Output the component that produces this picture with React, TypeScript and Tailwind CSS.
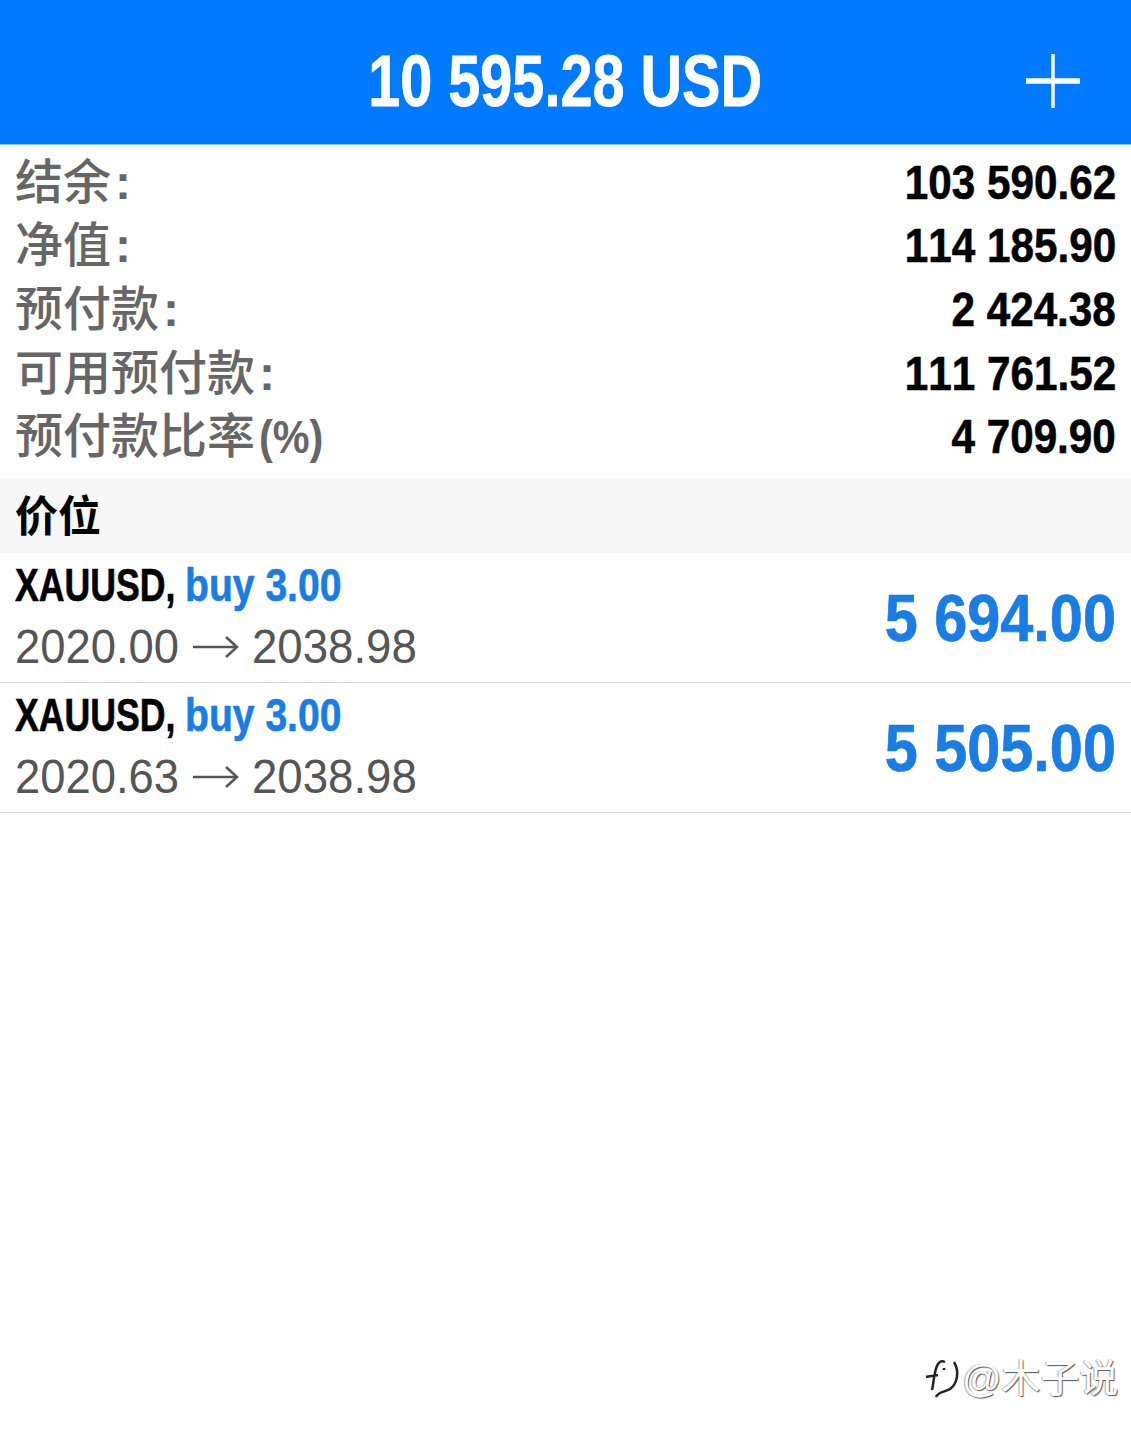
const SANS = "font-['Liberation_Sans','Noto_Sans_CJK_SC',sans-serif] [font-kerning:none]";

const summary = [
  { label: "结余", suffix: ":", value: "103 590.62" },
  { label: "净值", suffix: ":", value: "114 185.90" },
  { label: "预付款", suffix: ":", value: "2 424.38" },
  { label: "可用预付款", suffix: ":", value: "111 761.52" },
  { label: "预付款比率", suffix: "(%)", value: "4 709.90" },
];

const positions = [
  { open: "2020.00", profit: "5 694.00" },
  { open: "2020.63", profit: "5 505.00" },
];

function Position({ open, profit }: { open: string; profit: string }) {
  return (
    <div className="flex h-[130px] items-center justify-between border-b border-[#d4d4d4] pl-[15px] pr-[15px]">
      <div className="flex flex-col">
        <div className="flex h-[62px] items-start whitespace-nowrap text-[46px] leading-[54px] font-bold [-webkit-text-stroke:0.6px_currentColor]">
          <span className="inline-block w-[170px] origin-left scale-x-[0.775] text-black">XAUUSD,</span>
          <span className="inline-block origin-left scale-x-[0.85] text-[#1a7de3]">buy 3.00</span>
        </div>
        <div className="flex h-[58px] items-center whitespace-nowrap pb-[4px] text-[48px] leading-[58px] text-[#555555]">
          <span className="inline-block w-[163px] origin-left scale-x-[0.945]">{open}</span>
          <svg width="46" height="24" viewBox="0 0 46 24" className="ml-[15px] mr-[13px]" fill="none" stroke="#555555" strokeWidth="2.5">
            <path d="M0 12H44M33 2L44 12L33 22" />
          </svg>
          <span className="inline-block w-[165px] origin-left scale-x-[0.95]">2038.98</span>
        </div>
      </div>
      <div className="origin-right scale-x-[0.9] whitespace-nowrap text-[66px] leading-none font-bold text-[#1a7de3] [-webkit-text-stroke:0.7px_currentColor]">
        {profit}
      </div>
    </div>
  );
}

export default function App() {
  return (
    <div className={`relative h-[1441px] w-[1131px] overflow-hidden bg-white ${SANS}`}>
      <header className="relative flex h-[145px] items-center justify-center border-b border-[#8cc1fb] bg-[#007aff] pt-[18px] text-white">
        <div className="scale-x-[0.8] whitespace-nowrap text-[72px] leading-none font-bold [-webkit-text-stroke:0.8px_currentColor]">
          10 595.28 USD
        </div>
        <svg width="54" height="54" viewBox="0 0 54 54" className="absolute right-[51px] top-[54px]" fill="none" stroke="white">
          <path d="M27 0V54" strokeWidth="3.5" />
          <path d="M0 27H54" strokeWidth="5.5" />
        </svg>
      </header>

      <section className="flex h-[333px] flex-col pt-[6px]">
        {summary.map((row) => (
          <div key={row.label} className="flex h-[63.6px] items-center justify-between pl-[15px] pr-[15px]">
            <span className="flex items-center whitespace-nowrap text-[48px] leading-none font-medium text-[#666666]">
              {row.label}
              {row.suffix === ":" ? (
                <span className="ml-[4px] font-bold">:</span>
              ) : (
                <span className="ml-[4px] inline-block origin-left scale-x-[0.9] text-[46px] font-bold">{row.suffix}</span>
              )}
            </span>
            <span className="origin-right scale-x-[0.88] whitespace-nowrap text-[48px] leading-none font-bold text-black [-webkit-text-stroke:0.6px_currentColor]">
              {row.value}
            </span>
          </div>
        ))}
      </section>

      <div className="flex h-[75px] items-center bg-[#f7f7f7] pl-[15px] pt-[3px] text-[43px] leading-none font-bold text-black">
        价位
      </div>

      {positions.map((p) => (
        <Position key={p.open} open={p.open} profit={p.profit} />
      ))}

      {/* watermark */}
      <div className="absolute left-[924px] top-[1352px] flex items-center">
        <svg width="36" height="52" viewBox="0 0 36 52" fill="none" stroke="#222222" strokeWidth="2.5">
          <path d="M2 25C5 24 9 24 14 23M8 38C10 30 10 18 14 12C16 9 19 9 21 10M20 16V18M30 10C36 20 33 32 26 37C21 40 14 40 12 45" />
        </svg>
        <span className="ml-[2px] whitespace-nowrap text-[39px] leading-none text-white [text-shadow:1px_1px_1px_#555,-1px_0_1px_#aaa]">
          @木子说
        </span>
      </div>
    </div>
  );
}
